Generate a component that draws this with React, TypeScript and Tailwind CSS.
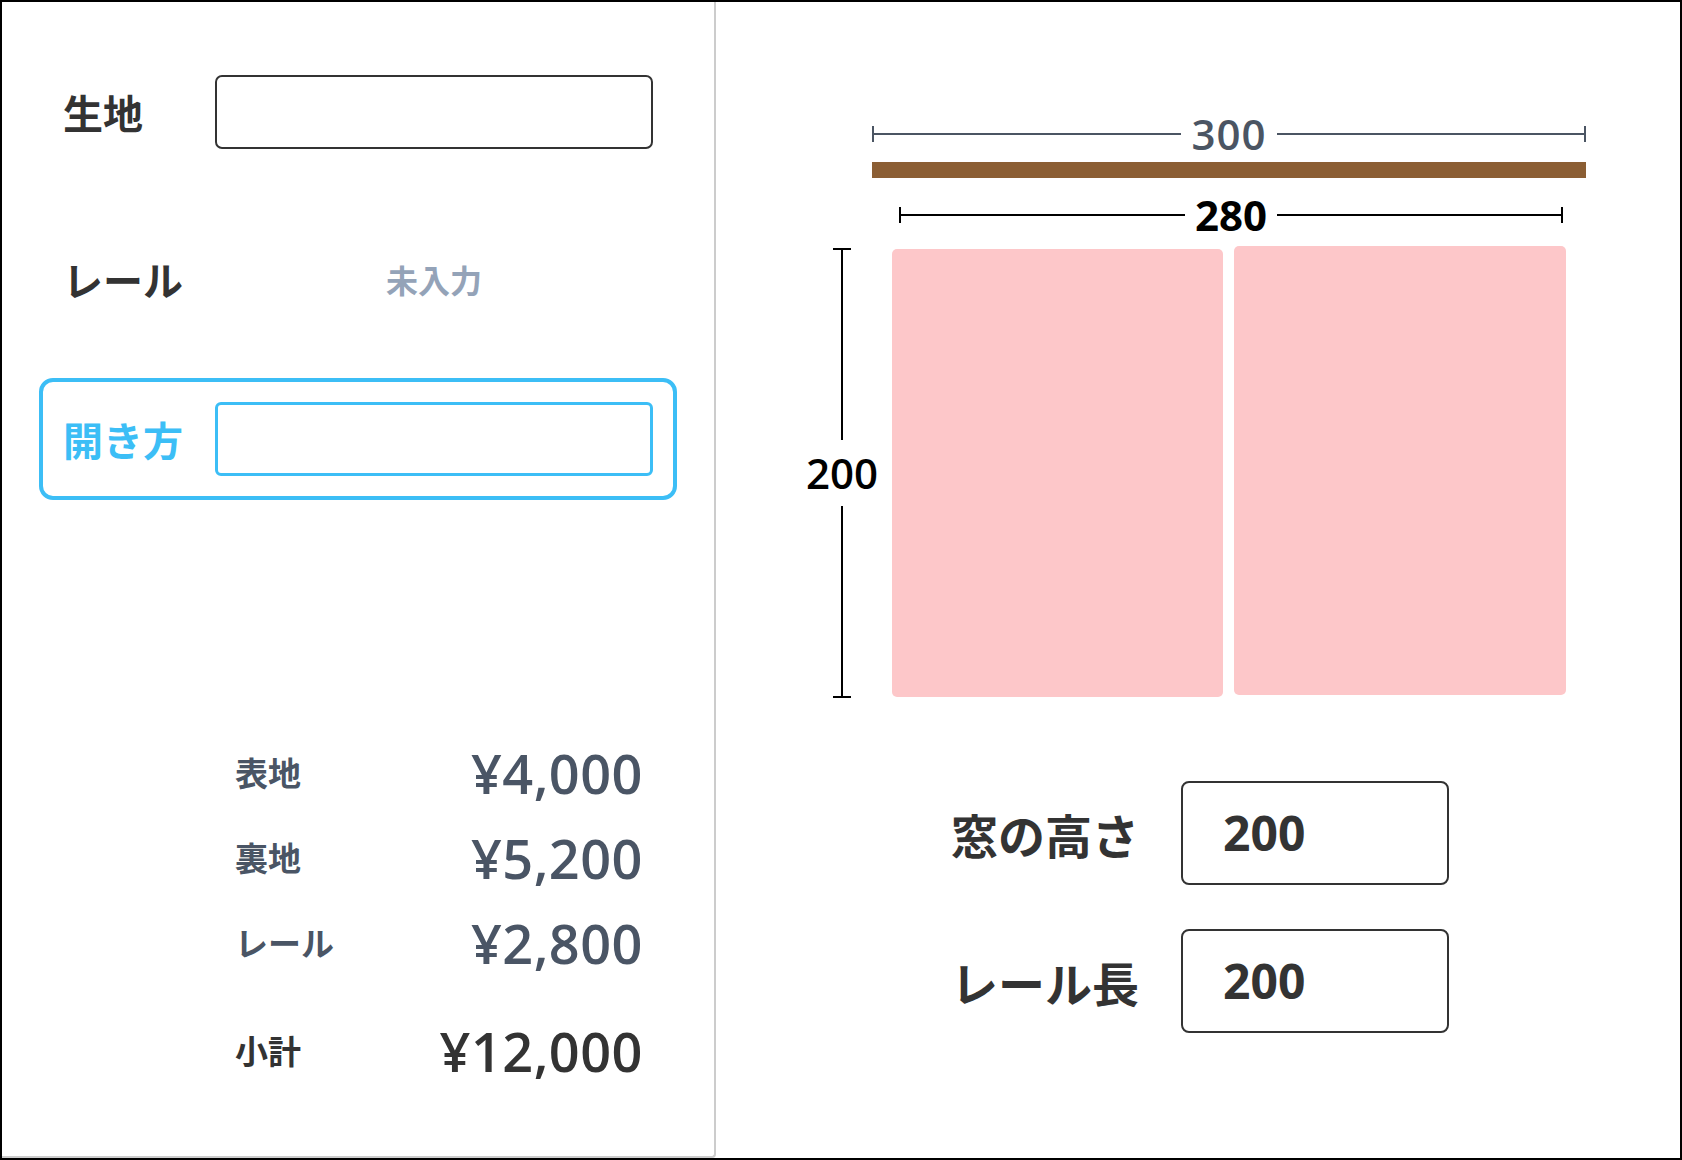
import React from "react";

const FONT = '"Open Sans", "Noto Sans CJK JP", sans-serif';
const JP = '"Noto Sans CJK JP", "Open Sans", sans-serif';

function HDim({ label, color, textClass }: { label: string; color: string; textClass: string }) {
  return (
    <div className="flex items-center h-[40px]">
      <div className={`w-[2px] h-[16px] ${color}`} />
      <div className={`flex-1 h-[2px] ${color}`} />
      <div className={`px-[10px] leading-none ${textClass}`} style={{ fontFamily: FONT }}>
        {label}
      </div>
      <div className={`flex-1 h-[2px] ${color}`} />
      <div className={`w-[2px] h-[16px] ${color}`} />
    </div>
  );
}

function PriceRow({ label, value, dark }: { label: string; value: string; dark?: boolean }) {
  return (
    <div className="flex items-center justify-between h-[85px]">
      <span
        className={`text-[33px] font-semibold ${dark ? "text-[#333333]" : "text-[#4a5565]"}`}
        style={{ fontFamily: JP }}
      >
        {label}
      </span>
      <span
        className={`text-[54px] font-semibold leading-none tracking-[0.5px] ${dark ? "text-[#333333]" : "text-[#4a5565]"}`}
        style={{ fontFamily: FONT }}
      >
        {value}
      </span>
    </div>
  );
}

export default function App() {
  return (
    <div
      className="w-[1682px] h-[1160px] border-2 border-black flex bg-white overflow-hidden"
      style={{ fontFamily: JP }}
    >
      {/* Left panel */}
      <div className="w-[714px] h-full border-r-2 border-b-2 border-[#cccccc] rounded-br-[4px] pl-[37px] pt-[49px] shrink-0">
        <div className="flex items-center w-[638px] h-[122px] border-4 border-transparent rounded-[14px] px-[20px]">
          <div className="w-[152px] text-[40px] font-bold text-[#333333] leading-none">生地</div>
          <div className="w-[438px] h-[74px] border-2 border-[#333333] rounded-[7px]" />
        </div>

        <div className="mt-[45px] flex items-center w-[638px] h-[122px] border-4 border-transparent rounded-[14px] px-[20px]">
          <div className="w-[152px] text-[40px] font-bold text-[#333333] leading-none">レール</div>
          <div className="w-[438px] text-center text-[32px] font-bold text-[#94a3b8] leading-none">未入力</div>
        </div>

        <div className="mt-[38px] flex items-center w-[638px] h-[122px] border-4 border-[#3cbef6] rounded-[14px] px-[20px]">
          <div className="w-[152px] text-[40px] font-bold text-[#3cbef6] leading-none">開き方</div>
          <div className="w-[438px] h-[74px] border-[3px] border-[#3cbef6] rounded-[6px]" />
        </div>

        <div className="mt-[230px] ml-[196px] w-[408px]">
          <PriceRow label="表地" value="¥4,000" />
          <PriceRow label="裏地" value="¥5,200" />
          <PriceRow label="レール" value="¥2,800" />
          <div className="mt-[23px]">
            <PriceRow label="小計" value="¥12,000" dark />
          </div>
        </div>
      </div>

      {/* Right panel */}
      <div className="flex-1 pt-[112px]">
        <div className="ml-[156px] w-[714px]">
          <HDim label="300" color="bg-[#4b5563]" textClass="text-[42px] font-semibold text-[#4b5563] tracking-[1px]" />
        </div>
        <div className="mt-[8px] ml-[156px] w-[714px] h-[16px] bg-[#8b5e34]" />
        <div className="mt-[17px] ml-[183px] w-[664px]">
          <HDim label="280" color="bg-black" textClass="text-[42px] font-bold text-black" />
        </div>

        <div className="mt-[11px] flex items-start">
          <div className="ml-[88px] w-[76px] h-[452px] pt-[2px] flex flex-col items-center">
            <div className="w-[18px] h-[2px] bg-black" />
            <div className="w-[2px] flex-1 bg-black" />
            <div
              className="my-[12px] text-[42px] font-semibold text-black leading-none"
              style={{ fontFamily: FONT }}
            >
              200
            </div>
            <div className="w-[2px] flex-1 bg-black" />
            <div className="w-[18px] h-[2px] bg-black" />
          </div>
          <div className="ml-[12px] mt-[3px] w-[331px] h-[448px] rounded-[5px] bg-[#fdc7c9]" />
          <div className="ml-[11px] w-[332px] h-[449px] rounded-[5px] bg-[#fdc7c9]" />
        </div>

        <div className="mt-[83px] ml-[229px] grid grid-cols-[194px_268px] gap-x-[42px] gap-y-[44px] items-center">
          <div className="text-right text-[47px] font-bold text-[#333333] leading-none whitespace-nowrap">窓の高さ</div>
          <div className="h-[104px] border-2 border-[#333333] rounded-[8px] flex items-center pl-[40px]">
            <span className="text-[48px] font-bold text-[#333333] leading-none" style={{ fontFamily: FONT }}>
              200
            </span>
          </div>
          <div className="text-right text-[47px] font-bold text-[#333333] leading-none whitespace-nowrap">レール長</div>
          <div className="h-[104px] border-2 border-[#333333] rounded-[8px] flex items-center pl-[40px]">
            <span className="text-[48px] font-bold text-[#333333] leading-none" style={{ fontFamily: FONT }}>
              200
            </span>
          </div>
        </div>
      </div>
    </div>
  );
}
